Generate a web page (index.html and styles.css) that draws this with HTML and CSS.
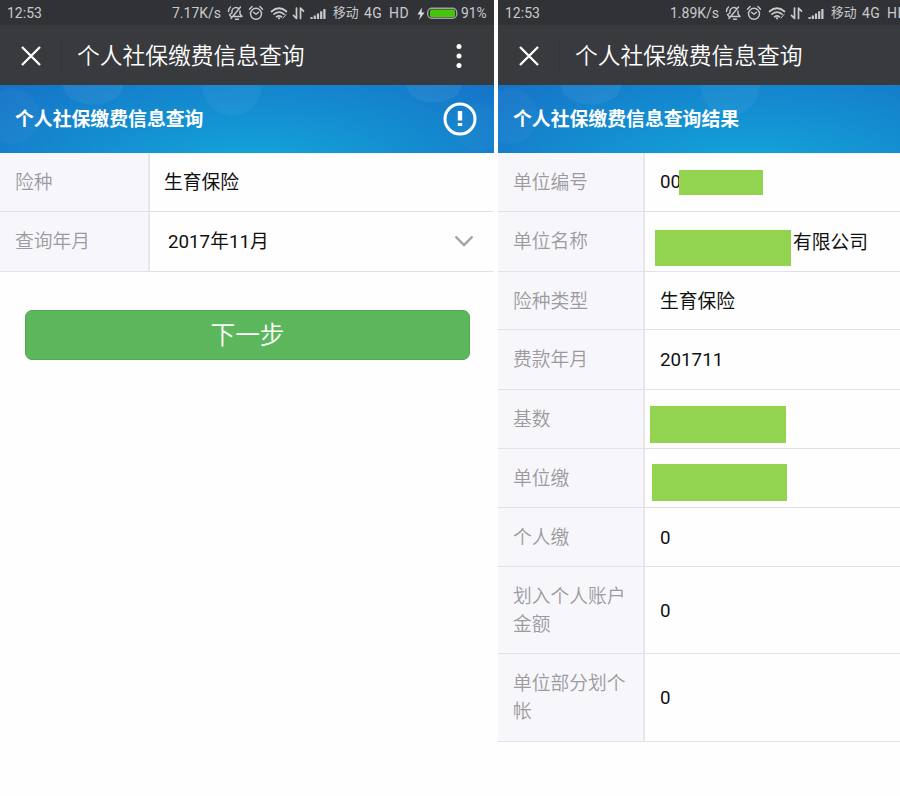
FILE: index.html
```
<!DOCTYPE html>
<html lang="zh-CN">
<head>
<meta charset="utf-8">
<title>个人社保缴费信息查询</title>
<link rel="stylesheet" href="styles.css">
</head>
<body>
<svg class="defs" aria-hidden="true">
  <symbol id="status-icons" viewBox="0 0 100 25">
    <g fill="none" stroke="#c9cacc" stroke-width="1.4" stroke-linecap="round" stroke-linejoin="round">
      <path d="M4 15.500 2.500 13.500 5 12V9.500a4 4 0 0 1 7-1.500M13 10v3l2 2.500H7M8.500 18.300h3M1.500 10.500Q1.500 7.500 3.500 6M13.500 6 4 17.500"/>
      <circle cx="29" cy="12.800" r="5.500"/>
      <path d="M22.500 8.200l2.600-2.600M35.500 8.200l-2.600-2.600M26.500 11.200l2.500 2 2.500-2"/>
      <path d="M44.500 10.500Q52 4 59.500 10.500M47 13.200Q52 9 57 13.200M49.500 15.800Q52 13.800 54.500 15.800" stroke-width="1.700"/>
      <path d="M56 17l3-3.500" stroke-width="1"/>
      <path d="M69.500 7v10.500l-3-3.200M73.500 17.500V7l3 3.200" stroke-width="1.700"/>
    </g>
    <circle cx="52" cy="17.300" r="1.100" fill="#c9cacc"/>
    <path d="M83.500 16h2.200v2h-2.200zM86.700 14.500h2.200V18h-2.200zM89.900 12.500h2.200V18h-2.200zM93.100 10.300h2.200V18h-2.200zM96.300 8h2.200v10h-2.200z" fill="#c9cacc"/>
  </symbol>
</svg>
<main class="screens">
  <section class="screen">
    <div class="status">
      <span class="clock">12:53</span>
      <span class="speed">7.17K/s</span>
      <svg class="icons"><use href="#status-icons"/></svg>
      <span class="carrier">移动</span>
      <span class="net">4G</span>
      <span class="hd">HD</span>
      <svg class="battery" viewBox="0 0 42 25">
        <path d="M5 6.500.5 13.500h3L2 19 7.500 11.500h-3z" fill="#dcdddf"/>
        <rect x="10.700" y="7.200" width="29" height="10" rx="4" fill="none" stroke="#9ea0a2" stroke-width="1.400"/>
        <rect x="13" y="8.500" width="25" height="7.500" rx="1.500" fill="#45c60c"/>
      </svg>
      <span class="percent">91%</span>
    </div>
    <header class="titlebar">
      <svg class="close" viewBox="0 0 20 20"><path d="M1 1 19 19M19 1 1 19"/></svg>
      <h1>个人社保缴费信息查询</h1>
      <svg class="more" viewBox="0 0 6 26"><circle cx="3" cy="3.500" r="2.500"/><circle cx="3" cy="13" r="2.500"/><circle cx="3" cy="22.500" r="2.500"/></svg>
    </header>
    <div class="banner">
      <h2>个人社保缴费信息查询</h2>
      <svg class="info" viewBox="0 0 34 34"><circle cx="17" cy="17" r="15" fill="none" stroke="#fff" stroke-width="3"/><path d="M14.800 9h4.400v9.500h-4.400zM14.800 21h4.400v3h-4.400z" fill="#fff"/></svg>
    </div>
    <div class="table form">
      <div class="row r59"><div class="label">险种</div><div class="value kind">生育保险</div></div>
      <div class="row r60"><div class="label">查询年月</div><div class="value picker"><span>2017年11月</span><svg class="chevron" viewBox="0 0 20 12"><path d="M1.500 1.500 10 10 18.500 1.500"/></svg></div></div>
    </div>
    <button class="next">下一步</button>
  </section>
  <section class="screen result">
    <div class="status">
      <span class="clock">12:53</span>
      <span class="speed">1.89K/s</span>
      <svg class="icons"><use href="#status-icons"/></svg>
      <span class="carrier">移动</span>
      <span class="net">4G</span>
      <span class="hd">HD</span>
    </div>
    <header class="titlebar">
      <svg class="close" viewBox="0 0 20 20"><path d="M1 1 19 19M19 1 1 19"/></svg>
      <h1>个人社保缴费信息查询</h1>
    </header>
    <div class="banner"><h2>个人社保缴费信息查询结果</h2></div>
    <div class="table">
      <div class="row r59"><div class="label">单位编号</div><div class="value">00<i class="mask m1"></i></div></div>
      <div class="row r60"><div class="label">单位名称</div><div class="value company"><i class="mask m2"></i>有限公司</div></div>
      <div class="row r58"><div class="label">险种类型</div><div class="value type">生育保险</div></div>
      <div class="row r60"><div class="label">费款年月</div><div class="value">201711</div></div>
      <div class="row r59"><div class="label">基数</div><div class="value"><i class="mask m3"></i></div></div>
      <div class="row r59"><div class="label">单位缴</div><div class="value"><i class="mask m4"></i></div></div>
      <div class="row r59"><div class="label">个人缴</div><div class="value digit">0</div></div>
      <div class="row r87"><div class="label">划入个人账户金额</div><div class="value digit">0</div></div>
      <div class="row r88 last"><div class="label">单位部分划个帐</div><div class="value digit">0</div></div>
    </div>
  </section>
</main>
</body>
</html>
```
FILE: styles.css
```
* { box-sizing: border-box; }
body {
  margin: 0;
  width: 900px;
  height: 796px;
  overflow: hidden;
  background: #fefefe;
  font-family: Roboto, "Noto Sans CJK SC", sans-serif;
  font-size: 18.750px;
  color: #111;
}
.defs { position: absolute; width: 0; height: 0; }
.screens { display: flex; gap: 4px; height: 796px; overflow: hidden; }
.screen { flex: 0 0 494px; overflow: hidden; }

.status {
  display: flex;
  align-items: center;
  height: 25px;
  padding: 1px 0 0 7px;
  background: #303236;
  color: #c9cacc;
  font-size: 14px;
  line-height: 24px;
  white-space: nowrap;
}
.status > * { flex: none; }
.clock { width: 165px; }
.speed { width: 55px; }
.icons { width: 100px; height: 25px; }
.carrier { width: 37px; font-size: 12.800px; padding-left: 6px; }
.net { width: 25px; letter-spacing: 0.4px; }
.hd { width: 28px; letter-spacing: 0.5px; }
.battery { width: 42px; height: 25px; }
.percent { padding-left: 2px; font-size: 13.800px; }

.titlebar {
  display: flex;
  align-items: center;
  height: 60px;
  padding: 1px 32px 0 21px;
  background: #393a3e;
}
.close { width: 20px; height: 20px; }
.close path { fill: none; stroke: #fff; stroke-width: 2.300; }
h1, h2 { margin: 0; color: #fff; white-space: nowrap; }
h1 {
  margin-left: 20px;
  padding: 2px 0 0 15px;
  border-left: 1px solid #333438;
  font-size: 22.750px;
  font-weight: 350;
  line-height: 32px;
}
.more { width: 6px; height: 26px; margin-left: auto; fill: #fff; }

.banner {
  display: flex;
  align-items: center;
  justify-content: space-between;
  height: 68px;
  padding: 0 17px 0 15px;
  background:
    radial-gradient(circle at 12px 31px, #ffffff08 26px, transparent 29px),
    radial-gradient(ellipse 31px 20px at 93px 0, #ffffff0e 94%, transparent),
    radial-gradient(ellipse 30px 29px at 232px 2px, #ffffff0b 94%, transparent),
    radial-gradient(ellipse 28px 18px at 434px 0, #ffffff0e 94%, transparent),
    radial-gradient(circle at 478px 42px, #ffffff06 22px, transparent 25px),
    linear-gradient(to bottom, #156fc830, transparent),
    radial-gradient(ellipse 340px 145px at 250px 82px, #13a6da, #148bcf 55%, #176fc8);
}
h2 { padding-top: 2px; font-size: 18.850px; font-weight: 700; line-height: 66px; }
.info { width: 34px; height: 34px; }

.row { display: flex; border-bottom: 1px solid #e3e1e5; }
.r58 { height: 58px; }
.r59 { height: 59px; }
.r60 { height: 60px; }
.r87 { height: 87px; }
.r88 { height: 88px; }
.label {
  flex: 0 0 147px;
  display: flex;
  align-items: center;
  padding: 2px 15px 0;
  border-right: 2px solid #e8e6ea;
  background: #f7f6fa;
  color: #9c9a9e;
  font-weight: 350;
  line-height: 28px;
}
.form .label { flex-basis: 150px; }
.r60 .label, .last .label { padding-top: 0; }
.value {
  position: relative;
  flex: 1;
  display: flex;
  align-items: center;
  padding-left: 15px;
}
.kind { padding-left: 14px; padding-bottom: 3px; }
.type { padding-bottom: 2px; }
.picker { justify-content: space-between; padding: 0 20px 1px 18px; }
.picker span { padding-bottom: 3px; }
.digit { padding-top: 2px; }
.last .digit { padding-top: 0; }
.chevron { width: 20px; height: 12px; }
.chevron path { fill: none; stroke: #a2a2a2; stroke-width: 2.300; }
.company { padding: 0 0 3px 148px; }

.mask { position: absolute; background: #92d450; }
.m1 { left: 34px; top: 17px; width: 84px; height: 25px; }
.m2 { left: 10px; top: 18px; width: 136px; height: 36px; }
.m3 { left: 5px; top: 16.400px; width: 136px; height: 37px; }
.m4 { left: 7px; top: 15px; width: 135px; height: 37px; }

.next {
  display: block;
  width: 445px;
  height: 50px;
  margin: 38px 0 0 25px;
  padding: 2px 0 0;
  border: 1px solid #50ab50;
  border-radius: 7px;
  background: #5cb75c;
  color: #fff;
  font: 350 24.700px/46px Roboto, "Noto Sans CJK SC", sans-serif;
}
```
